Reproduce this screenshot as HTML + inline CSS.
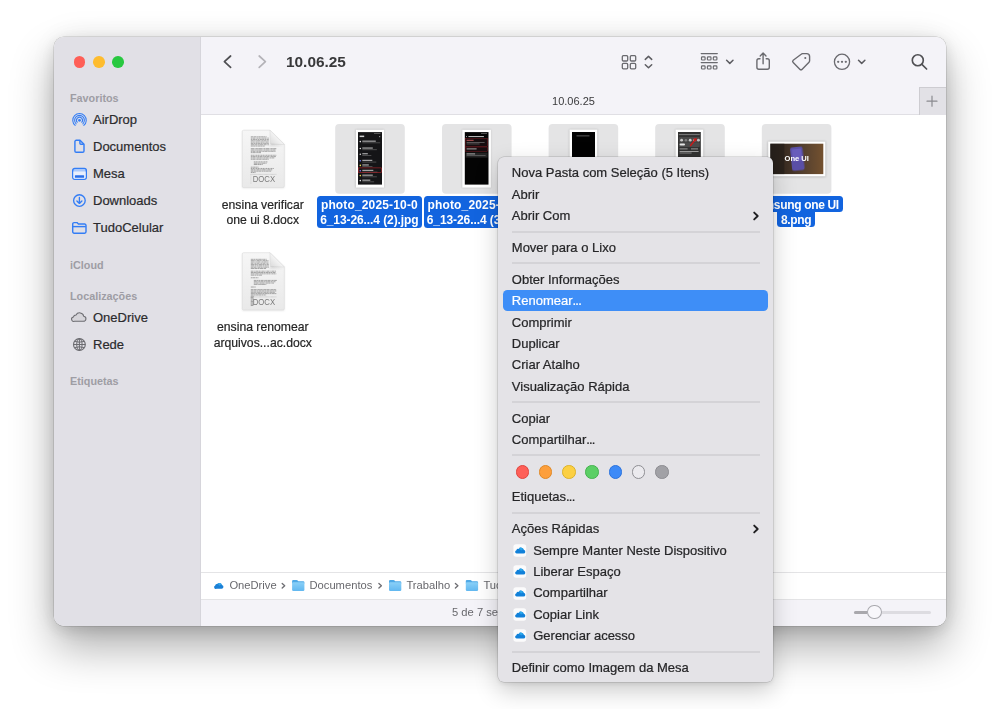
<!DOCTYPE html>
<html lang="pt-BR">
<head>
<meta charset="utf-8">
<title>Finder</title>
<style>
*{box-sizing:border-box;margin:0;padding:0}
html,body{width:1000px;height:709px;overflow:hidden;background:#fff}
body{font-family:"Liberation Sans",sans-serif;color:#262626;position:relative;-webkit-font-smoothing:antialiased}
.abs{position:absolute}
#win{position:absolute;left:54.4px;top:36.6px;width:891.3px;height:589.1px;border-radius:10px;background:#fff;
 box-shadow:0 0 0 .5px rgba(0,0,0,.2),0 22px 44px rgba(0,0,0,.31),0 4px 16px rgba(0,0,0,.11),0 0 34px rgba(0,0,0,.07);overflow:hidden;transform:translateZ(0)}
#wi{position:absolute;left:-.4px;top:-.6px;width:892px;height:590px}
#side{position:absolute;left:0;top:0;width:146.8px;height:590px;z-index:2;background:#e1e0e6;border-right:1px solid #d6d5db}
#tool{position:absolute;left:147px;top:0;width:745px;height:79px;background:#f4f3f8;border-bottom:1px solid #e0dfe4}
#content{position:absolute;left:147px;top:79px;width:745px;height:457px;background:#fff}
#path{position:absolute;left:147px;top:536px;width:745px;height:28px;background:#fff;border-top:1px solid #e4e4e6;border-bottom:1px solid #e4e4e6}
#status{position:absolute;left:147px;top:564px;width:745px;height:26px;background:#f4f3f8}
.tl{position:absolute;top:20px;width:11.6px;height:11.6px;border-radius:50%}
.sh{position:absolute;left:16px;font-size:10.8px;font-weight:bold;color:#9e9da4;white-space:nowrap}
.si{position:absolute;left:39px;font-size:13px;color:#2b2b2d;white-space:nowrap;-webkit-text-stroke:.2px currentColor}
.sic{position:absolute;left:17px}
#menu{position:absolute;left:497.8px;top:156.9px;width:274.9px;height:525.6px;border-radius:6px;background:#e4e3e7;transform:translateZ(0);
 box-shadow:0 0 0 .5px rgba(0,0,0,.2),0 9px 24px rgba(0,0,0,.2),0 2px 5px rgba(0,0,0,.08)}
.mi{position:absolute;left:14px;font-size:13px;color:#262628;white-space:nowrap;line-height:16px;margin-top:.6px;margin-left:-.4px;-webkit-text-stroke:.22px currentColor}
.ms{position:absolute;left:14.6px;width:248px;height:2px;background:rgba(0,0,0,.065);margin-top:-.5px}

.fl{position:absolute;width:100px;text-align:center;font-size:12.2px;line-height:15.6px;color:#262626;white-space:nowrap;padding-top:1.7px;-webkit-text-stroke:.2px currentColor}
.sl,.sl2{position:absolute;background:#1264df;color:#fff;font-size:12px;font-weight:bold;line-height:15.5px;text-align:center;white-space:nowrap;border-radius:3.5px;height:31.5px;padding-top:1.6px;overflow:hidden}
.sl i{font-style:normal;letter-spacing:.15px}.sl b{letter-spacing:-.085px}.sl2{letter-spacing:-.34px}
.sl2{height:15.8px}
.pt{position:absolute;top:4.7px;font-size:11.2px;line-height:14px;color:#68686d;white-space:nowrap}
</style>
</head>
<body>
<div id="win"><div id="wi">
  <div id="side">
    <div class="tl" style="left:19.6px;background:#fe5f57"></div>
    <div class="tl" style="left:39px;background:#febc2e"></div>
    <div class="tl" style="left:58.4px;background:#28c840"></div>

    <div class="sh" style="top:56px">Favoritos</div>
    <svg class="sic" style="left:17px;top:75.8px" width="17" height="17" viewBox="0 0 17 17" fill="none" stroke="#337df5" stroke-linecap="round">
      <circle cx="8.5" cy="8.3" r="1.4" fill="#337df5" stroke="none"/>
      <path d="M6.27 10.31 A3.0 3.0 0 1 1 10.73 10.31" stroke-width="1.05"/>
      <path d="M5.10 11.82 A4.9 4.9 0 1 1 11.90 11.82" stroke-width="1.05"/>
      <path d="M4.16 13.47 A6.75 6.75 0 1 1 12.84 13.47" stroke-width="1.05"/>
    </svg>
    <div class="si" style="top:76px">AirDrop</div>
    <svg class="sic" style="left:19px;top:103px" width="13" height="15" viewBox="0 0 13 15" fill="none" stroke="#337df5" stroke-width="1.42" stroke-linejoin="round">
      <path d="M1.9 2.6 a1.3 1.3 0 0 1 1.3 -1.3 H7 L11 5.3 V12 a1.3 1.3 0 0 1 -1.3 1.3 H3.2 a1.3 1.3 0 0 1 -1.3 -1.3 Z"/>
      <path d="M6.9 1.5 V4.3 a1 1 0 0 0 1 1 H10.8"/>
    </svg>
    <div class="si" style="top:103px">Documentos</div>
    <svg class="sic" style="left:17px;top:131px" width="17" height="14" viewBox="0 0 17 14" fill="none">
      <rect x="1.7" y="1.4" width="13.6" height="10.9" rx="2" fill="#a9c8fb" stroke="#337df5" stroke-width="1.4"/>
      <path d="M2.35 4.4 H14.65 V10.6 a1.1 1.1 0 0 1 -1.1 1.1 H3.45 a1.1 1.1 0 0 1 -1.1 -1.1 Z" fill="#e9effc"/>
      <rect x="3.9" y="8.2" width="9.2" height="2.5" rx=".5" fill="#2a6fe8"/>
    </svg>
    <div class="si" style="top:130px">Mesa</div>
    <svg class="sic" style="left:18px;top:157px" width="15" height="15" viewBox="0 0 15 15" fill="none" stroke="#337df5" stroke-width="1.35" stroke-linecap="round" stroke-linejoin="round">
      <circle cx="7.4" cy="7.5" r="5.8"/>
      <path d="M7.4 4.4 V10.3 M4.9 8 L7.4 10.4 L9.9 8"/>
    </svg>
    <div class="si" style="top:157px">Downloads</div>
    <svg class="sic" style="left:17px;top:185px" width="17" height="14" viewBox="0 0 17 14" fill="none" stroke="#337df5" stroke-width="1.42" stroke-linejoin="round">
      <path d="M1.7 3 a1.4 1.4 0 0 1 1.4 -1.4 H6 L7.4 3 H13.6 a1.4 1.4 0 0 1 1.4 1.4 V10.8 a1.4 1.4 0 0 1 -1.4 1.4 H3.1 a1.4 1.4 0 0 1 -1.4 -1.4 Z"/>
      <path d="M1.9 5.6 H14.8"/>
    </svg>
    <div class="si" style="top:184px">TudoCelular</div>
    <div class="sh" style="top:222.5px">iCloud</div>
    <div class="sh" style="top:254px">Localizações</div>
    <svg class="sic" style="left:16px;top:274px" width="19" height="14" viewBox="0 0 19 14" fill="#d6d5da" stroke="#6c6c71" stroke-width="1.15" stroke-linejoin="round">
      <path transform="translate(9.1 6.9) scale(.93 .86) translate(-9.8 -6.75)" d="M5 11.9 H14.2 a3 3 0 0 0 .5 -5.95 A4.3 4.3 0 0 0 6.5 4.6 A3 3 0 0 0 3.6 6.9 A2.55 2.55 0 0 0 5 11.9 Z"/>
    </svg>
    <div class="si" style="top:274px">OneDrive</div>
    <svg class="sic" style="left:18px;top:301px" width="15" height="15" viewBox="0 0 15 15" fill="none" stroke="#6c6c71" stroke-width="1">
      <circle cx="7.4" cy="7.5" r="5.9" stroke-width="1.15"/>
      <ellipse cx="7.4" cy="7.5" rx="2.7" ry="5.9"/>
      <path d="M7.4 1.6 V13.4 M1.5 7.5 H13.3 M2.5 4.4 Q7.4 6 12.3 4.4 M2.5 10.6 Q7.4 9 12.3 10.6"/>
    </svg>
    <div class="si" style="top:301px">Rede</div>
    <div class="sh" style="top:338.7px">Etiquetas</div>
  </div>
  <div id="tool">
    <svg class="abs" style="left:0;top:0" width="745" height="79" viewBox="201 36 745 79" fill="none" stroke-linecap="round" stroke-linejoin="round">
      <path d="M230.6 56 L224.4 61.7 L230.6 67.4" stroke="#4f4f53" stroke-width="1.7"/>
      <path d="M259.2 56 L265.4 61.7 L259.2 67.4" stroke="#b4b3b8" stroke-width="1.7"/>
      <g stroke="#6a6a6f" stroke-width="1.3">
        <rect x="622.3" y="55.6" width="5.4" height="5.4" rx="1.1"/>
        <rect x="630.3" y="55.6" width="5.4" height="5.4" rx="1.1"/>
        <rect x="622.3" y="63.4" width="5.4" height="5.4" rx="1.1"/>
        <rect x="630.3" y="63.4" width="5.4" height="5.4" rx="1.1"/>
      </g>
      <path d="M645.3 59.4 L648.5 56.4 L651.7 59.4 M645.3 64.8 L648.5 67.8 L651.7 64.8" stroke="#5d5d62" stroke-width="1.5"/>
      <g stroke="#6a6a6f" stroke-width="1.2">
        <path d="M701.2 53.5 H717.3 M701.2 62.6 H717.3" stroke-width="1.25"/>
        <rect x="701.5" y="56.9" width="3.6" height="3.1" rx=".8"/>
        <rect x="707.4" y="56.9" width="3.6" height="3.1" rx=".8"/>
        <rect x="713.3" y="56.9" width="3.6" height="3.1" rx=".8"/>
        <rect x="701.5" y="65.9" width="3.6" height="3.1" rx=".8"/>
        <rect x="707.4" y="65.9" width="3.6" height="3.1" rx=".8"/>
        <rect x="713.3" y="65.9" width="3.6" height="3.1" rx=".8"/>
      </g>
      <path d="M726.6 60.2 L729.8 63.4 L733 60.2" stroke="#5d5d62" stroke-width="1.5"/>
      <g stroke="#6a6a6f" stroke-width="1.4">
        <path d="M760 58.7 H758.9 a2 2 0 0 0 -2 2 V67.2 a2 2 0 0 0 2 2 H767.3 a2 2 0 0 0 2 -2 V60.7 a2 2 0 0 0 -2 -2 H766.2"/>
        <path d="M763.1 63.8 V53.2 M760.2 56 L763.1 53.1 L766 56"/>
      </g>
      <g stroke="#6a6a6f" stroke-width="1.4">
        <path d="M802.6 53.6 H806.6 a3 3 0 0 1 3 3 V60.8 a2 2 0 0 1 -.6 1.4 L802.2 69.2 a1.7 1.7 0 0 1 -2.4 0 L793.2 62.6 a1.7 1.7 0 0 1 0 -2.4 L801.2 54.2 a2 2 0 0 1 1.4 -.6 Z"/>
        <circle cx="805.3" cy="58" r="1.05" fill="#6a6a6f" stroke="none"/>
      </g>
      <g stroke="#6a6a6f" stroke-width="1.3">
        <circle cx="842" cy="61.8" r="7.6"/>
        <circle cx="838.2" cy="61.8" r="1.15" fill="#6e6e73" stroke="none"/>
        <circle cx="842" cy="61.8" r="1.15" fill="#6e6e73" stroke="none"/>
        <circle cx="845.8" cy="61.8" r="1.15" fill="#6e6e73" stroke="none"/>
      </g>
      <path d="M858.5 60.2 L861.7 63.4 L864.9 60.2" stroke="#5d5d62" stroke-width="1.5"/>
      <g stroke="#505054" stroke-width="1.65">
        <circle cx="917.8" cy="60.2" r="5.5"/>
        <path d="M921.9 64.3 L926.6 69"/>
      </g>
      <rect x="919" y="87" width="28" height="28" fill="#e2e1e6"/>
      <path d="M919.5 87.5 V115 M919.5 87.5 H946" stroke="#cdccd1" stroke-width="1"/>
      <path d="M927 101.2 H937 M932 96.2 V106.2" stroke="#8a8a8f" stroke-width="1.2"/>
    </svg>
    <div class="abs" style="left:85px;top:17px;font-size:15.4px;font-weight:bold;color:#38383a;line-height:18px;white-space:nowrap">10.06.25</div>
    <div class="abs" style="left:0;top:58px;width:745px;text-align:center;font-size:11px;color:#3a3a3c;line-height:14px">10.06.25</div>
  </div>
  <div id="content">
<svg class="abs" style="left:0;top:0" width="745" height="457" viewBox="201 115 745 457">
<defs><filter id="blur1" x="-20%" y="-20%" width="140%" height="140%"><feGaussianBlur stdDeviation="1.1"/></filter><filter id="blurp" x="-30%" y="-30%" width="160%" height="160%"><feGaussianBlur stdDeviation=".7"/></filter><filter id="blur2" x="-30%" y="-30%" width="160%" height="160%"><feGaussianBlur stdDeviation="2.2"/></filter></defs>

      <defs><linearGradient id="pga" x1="0" y1="0" x2="0" y2="1"><stop offset="0" stop-color="#f6f6f6"/><stop offset="1" stop-color="#e9e9e9"/></linearGradient>
      <linearGradient id="fda" x1="0" y1="1" x2="1" y2="0"><stop offset="0" stop-color="#d9d9d9"/><stop offset=".5" stop-color="#f4f4f4"/><stop offset="1" stop-color="#fdfdfd"/></linearGradient></defs>
      <path d="M243.3 131.39999999999998 H270.0 L284.3 144.5 V188.3 H242.3 V131.39999999999998 Z" fill="#000" opacity=".10" filter="url(#blur1)"/>
      <path d="M243.5 130.2 H270.0 L284.3 144.5 V186.3 a1.2 1.2 0 0 1 -1.2 1.2 H243.5 a1.2 1.2 0 0 1 -1.2 -1.2 V131.39999999999998 a1.2 1.2 0 0 1 1.2 -1.2 Z" fill="url(#pga)" stroke="#dcdcdc" stroke-width=".6"/>
      <g stroke="#444" stroke-width=".66" opacity=".68"><path d="M250.8 136.80 H266.6" stroke-dasharray="2.5 0.36 2.6 0.34 1.3 0.37"/><path d="M250.8 138.12 H268.8" stroke-dasharray="1.8 0.35 2.1 0.41 0.7 0.31"/><path d="M250.8 139.44 H268.8" stroke-dasharray="1.6 0.41 2.2 0.26 2.0 0.44"/><path d="M250.8 140.76 H268.8" stroke-dasharray="3.0 0.37 1.1 0.25 1.3 0.26"/><path d="M250.8 142.08 H268.8" stroke-dasharray="1.9 0.3 0.9 0.34 1.2 0.42"/><path d="M250.8 143.40 H268.8" stroke-dasharray="2.6 0.38 1.8 0.38 1.2 0.31"/><path d="M250.8 144.72 H268.8" stroke-dasharray="3.8 0.45 2.5 0.39 1.0 0.3"/><path d="M250.8 146.04 H264.8" stroke-dasharray="2.1 0.26 2.3 0.33 1.8 0.33"/><path d="M250.8 148.68 H276.3" stroke-dasharray="3.7 0.42 0.8 0.29 1.9 0.34"/><path d="M250.8 150.00 H275.5" stroke-dasharray="3.8 0.33 0.9 0.38 1.7 0.3"/><path d="M250.8 151.32 H275.8" stroke-dasharray="1.6 0.32 2.7 0.4 0.8 0.3"/><path d="M250.8 152.64 H261.0" stroke-dasharray="1.6 0.26 2.4 0.29 1.4 0.34"/><path d="M250.8 155.28 H276.3" stroke-dasharray="1.9 0.4 1.1 0.38 0.8 0.33"/><path d="M250.8 156.60 H276.3" stroke-dasharray="1.9 0.3 2.7 0.41 1.0 0.43"/><path d="M250.8 157.92 H274.3" stroke-dasharray="1.9 0.33 2.5 0.38 0.7 0.45"/><path d="M250.8 159.24 H268.7" stroke-dasharray="1.9 0.3 2.3 0.32 1.0 0.26"/><path d="M253.8 161.88 H267.8" stroke-dasharray="1.6 0.37 1.3 0.37 1.1 0.34"/><path d="M253.8 163.20 H266.6" stroke-dasharray="3.7 0.35 1.9 0.42 0.9 0.28"/><path d="M253.8 164.52 H262.7" stroke-dasharray="3.6 0.41 1.3 0.29 1.6 0.44"/><path d="M250.8 167.16 H258.4" stroke-dasharray="1.9 0.44 2.6 0.37 1.2 0.27"/><path d="M250.8 168.48 H273.8" stroke-dasharray="1.5 0.44 1.3 0.39 1.0 0.41"/><path d="M250.8 169.80 H272.5" stroke-dasharray="2.8 0.31 1.2 0.39 0.7 0.3"/><path d="M250.8 171.12 H271.2" stroke-dasharray="2.7 0.42 2.0 0.31 1.9 0.29"/><path d="M250.8 172.44 H255.9" stroke-dasharray="1.4 0.3 1.7 0.26 0.8 0.32"/></g>
      <path d="M270.0 130.2 V142.5 a2 2 0 0 0 2 2 H284.3 Z" fill="url(#fda)" stroke="#d6d6d6" stroke-width=".5"/>
      <path d="M268.8 146.1 H283.90000000000003 L271.0 144.0 Z" fill="#000" opacity=".13" filter="url(#blur1)"/>
      <path d="M250.60000000000002 174.39999999999998 H276.3" stroke="#9a9a9a" stroke-width=".45" stroke-dasharray=".7 .5"/>
      <path d="M250.9 174.7 V183.7" stroke="#aaa" stroke-width=".4" stroke-dasharray=".6 .6"/>
      <text x="263.90000000000003" y="182.39999999999998" font-family="Liberation Sans, sans-serif" font-size="8.7" fill="#7b7b7b" text-anchor="middle" textLength="22.4" lengthAdjust="spacingAndGlyphs">DOCX</text>

      <defs><linearGradient id="pgb" x1="0" y1="0" x2="0" y2="1"><stop offset="0" stop-color="#f6f6f6"/><stop offset="1" stop-color="#e9e9e9"/></linearGradient>
      <linearGradient id="fdb" x1="0" y1="1" x2="1" y2="0"><stop offset="0" stop-color="#d9d9d9"/><stop offset=".5" stop-color="#f4f4f4"/><stop offset="1" stop-color="#fdfdfd"/></linearGradient></defs>
      <path d="M243.3 253.89999999999998 H270.0 L284.3 267.0 V310.8 H242.3 V253.89999999999998 Z" fill="#000" opacity=".10" filter="url(#blur1)"/>
      <path d="M243.5 252.7 H270.0 L284.3 267.0 V308.8 a1.2 1.2 0 0 1 -1.2 1.2 H243.5 a1.2 1.2 0 0 1 -1.2 -1.2 V253.89999999999998 a1.2 1.2 0 0 1 1.2 -1.2 Z" fill="url(#pgb)" stroke="#dcdcdc" stroke-width=".6"/>
      <g stroke="#444" stroke-width=".66" opacity=".68"><path d="M250.8 259.30 H266.6" stroke-dasharray="2.8 0.28 1.5 0.43 2.0 0.38"/><path d="M250.8 260.62 H268.8" stroke-dasharray="3.1 0.37 1.1 0.26 0.6 0.43"/><path d="M250.8 261.94 H268.8" stroke-dasharray="3.1 0.44 0.8 0.38 1.3 0.4"/><path d="M250.8 263.26 H268.8" stroke-dasharray="2.2 0.45 1.0 0.36 1.6 0.43"/><path d="M250.8 264.58 H268.8" stroke-dasharray="3.2 0.39 2.4 0.43 1.1 0.39"/><path d="M250.8 265.90 H268.8" stroke-dasharray="3.6 0.42 1.6 0.41 1.8 0.36"/><path d="M250.8 267.22 H268.8" stroke-dasharray="2.9 0.33 2.0 0.37 0.7 0.38"/><path d="M250.8 268.54 H266.1" stroke-dasharray="3.8 0.43 2.3 0.33 1.6 0.37"/><path d="M250.8 271.18 H276.3" stroke-dasharray="2.5 0.42 1.0 0.4 0.6 0.37"/><path d="M250.8 272.50 H275.5" stroke-dasharray="2.6 0.3 2.2 0.35 1.5 0.43"/><path d="M250.8 273.82 H276.3" stroke-dasharray="2.0 0.25 1.4 0.39 0.9 0.28"/><path d="M250.8 275.14 H262.3" stroke-dasharray="3.6 0.38 1.7 0.43 1.1 0.38"/><path d="M250.8 277.78 H258.4" stroke-dasharray="1.9 0.34 2.4 0.43 1.8 0.33"/><path d="M253.8 280.42 H276.8" stroke-dasharray="2.8 0.31 1.1 0.35 1.8 0.42"/><path d="M253.8 281.74 H275.5" stroke-dasharray="3.1 0.44 1.4 0.28 1.2 0.31"/><path d="M253.8 283.06 H274.2" stroke-dasharray="1.9 0.33 2.1 0.35 1.0 0.42"/><path d="M253.8 284.38 H266.6" stroke-dasharray="3.8 0.34 0.9 0.26 1.8 0.26"/><path d="M250.8 287.02 H255.9" stroke-dasharray="3.1 0.36 1.4 0.41 0.6 0.28"/><path d="M250.8 289.66 H276.3" stroke-dasharray="2.5 0.25 2.5 0.3 0.8 0.26"/><path d="M250.8 290.98 H276.3" stroke-dasharray="2.9 0.34 2.1 0.38 1.7 0.44"/><path d="M250.8 292.30 H275.0" stroke-dasharray="3.0 0.29 1.8 0.29 0.6 0.34"/><path d="M250.8 293.62 H276.3" stroke-dasharray="3.1 0.29 1.3 0.32 1.6 0.35"/><path d="M250.8 294.94 H266.1" stroke-dasharray="2.9 0.4 1.6 0.41 1.9 0.27"/><path d="M250.8 296.26 H253.9" stroke-dasharray="3.6 0.39 1.1 0.34 1.5 0.43"/><path d="M250.8 297.58 H253.9" stroke-dasharray="2.3 0.36 2.6 0.41 1.9 0.34"/><path d="M250.8 298.90 H253.9" stroke-dasharray="3.0 0.29 2.2 0.41 1.5 0.39"/><path d="M250.8 300.22 H253.9" stroke-dasharray="1.9 0.43 2.8 0.45 1.4 0.41"/><path d="M250.8 301.54 H253.9" stroke-dasharray="2.2 0.43 2.5 0.32 0.7 0.34"/><path d="M250.8 302.86 H253.9" stroke-dasharray="2.7 0.4 1.8 0.26 1.7 0.26"/><path d="M250.8 304.18 H253.9" stroke-dasharray="3.3 0.28 1.5 0.41 0.8 0.28"/><path d="M250.8 305.50 H253.4" stroke-dasharray="2.6 0.39 2.5 0.39 1.9 0.35"/></g>
      <path d="M270.0 252.7 V265.0 a2 2 0 0 0 2 2 H284.3 Z" fill="url(#fdb)" stroke="#d6d6d6" stroke-width=".5"/>
      <path d="M268.8 268.6 H283.90000000000003 L271.0 266.5 Z" fill="#000" opacity=".13" filter="url(#blur1)"/>
      <path d="M250.60000000000002 296.9 H276.3" stroke="#9a9a9a" stroke-width=".45" stroke-dasharray=".7 .5"/>
      <path d="M250.9 297.2 V306.2" stroke="#aaa" stroke-width=".4" stroke-dasharray=".6 .6"/>
      <text x="263.90000000000003" y="304.9" font-family="Liberation Sans, sans-serif" font-size="8.7" fill="#7b7b7b" text-anchor="middle" textLength="22.4" lengthAdjust="spacingAndGlyphs">DOCX</text>
<rect x="335.2" y="124" width="69.6" height="69.8" rx="4" fill="#e4e4e5"/>
<rect x="442" y="124" width="69.6" height="69.8" rx="4" fill="#e4e4e5"/>
<rect x="548.6" y="124" width="69.6" height="69.8" rx="4" fill="#e4e4e5"/>
<rect x="655.2" y="124" width="69.6" height="69.8" rx="4" fill="#e4e4e5"/>
<rect x="761.8" y="124" width="69.6" height="69.8" rx="4" fill="#e4e4e5"/>
<rect x="355.6" y="129.6" width="28.4" height="58.2" fill="#000" opacity=".16" filter="url(#blur1)"/><rect x="356" y="129.8" width="28" height="57.8" fill="#fff"/><rect x="358" y="132.1" width="24" height="52.5" fill="#151517"/><rect x="359.6" y="135.6" width="4.6" height="1.5" fill="#cfcfcf"/><rect x="379" y="136" width="1.2" height="1.2" fill="#888"/><rect x="374" y="133" width="6.5" height=".8" fill="#666"/><circle cx="360.3" cy="141.6" r=".8" fill="#e8e8e8"/><rect x="362.3" y="140.6" width="13.5" height="1.1" fill="#d0d0d0" opacity=".85"/><rect x="362.3" y="142.5" width="17.85" height=".7" fill="#777" opacity=".8"/><circle cx="360.3" cy="148.5" r=".8" fill="#e0e0e0"/><rect x="362.3" y="147.5" width="10.5" height="1.1" fill="#d0d0d0" opacity=".85"/><rect x="362.3" y="149.4" width="14.55" height=".7" fill="#777" opacity=".8"/><circle cx="360.3" cy="154.2" r=".8" fill="#dcdcdc"/><rect x="362.3" y="153.2" width="5.5" height="1.1" fill="#d0d0d0" opacity=".85"/><rect x="362.3" y="155.1" width="9.05" height=".7" fill="#777" opacity=".8"/><circle cx="360.3" cy="160.8" r=".8" fill="#6d7df0"/><rect x="362.3" y="159.8" width="10" height="1.1" fill="#d0d0d0" opacity=".85"/><rect x="362.3" y="161.70000000000002" width="14.0" height=".7" fill="#777" opacity=".8"/><circle cx="360.3" cy="165.4" r=".8" fill="#e8d34a"/><rect x="362.3" y="164.4" width="6.5" height="1.1" fill="#d0d0d0" opacity=".85"/><rect x="362.3" y="166.3" width="10.15" height=".7" fill="#777" opacity=".8"/><circle cx="360.3" cy="170.8" r=".8" fill="#8a72e8"/><rect x="362.3" y="169.8" width="11" height="1.1" fill="#d0d0d0" opacity=".85"/><rect x="362.3" y="171.70000000000002" width="15.100000000000001" height=".7" fill="#777" opacity=".8"/><circle cx="360.3" cy="175.6" r=".8" fill="#e8d34a"/><rect x="362.3" y="174.6" width="10.5" height="1.1" fill="#d0d0d0" opacity=".85"/><rect x="362.3" y="176.5" width="14.55" height=".7" fill="#777" opacity=".8"/><circle cx="360.3" cy="180.6" r=".8" fill="#e0e0e0"/><rect x="362.3" y="179.6" width="8" height="1.1" fill="#d0d0d0" opacity=".85"/><rect x="362.3" y="181.5" width="11.8" height=".7" fill="#777" opacity=".8"/><rect x="358.6" y="167.9" width="22.8" height="4.6" fill="none" stroke="#b5262c" stroke-width=".6"/>
<rect x="462" y="129.6" width="28.8" height="58.2" fill="#000" opacity=".16" filter="url(#blur1)"/><rect x="462.3" y="129.8" width="28.6" height="57.8" fill="#fff"/><rect x="464.8" y="132.1" width="23.7" height="52.5" fill="#040404"/><rect x="468.4" y="136" width="15.5" height="1.1" fill="#b5b5b5"/><rect x="466" y="136.1" width="1" height="1" fill="#999"/><rect x="481" y="133" width="6" height=".8" fill="#666"/><rect x="465.6" y="138.7" width="22" height="7.8" fill="#160d0f" stroke="#7e1f24" stroke-width=".5"/><rect x="466.6" y="139.8" width="7" height="1" fill="#b85555"/><rect x="466.6" y="142" width="18" height=".7" fill="#777"/><rect x="466.6" y="143.6" width="13" height=".7" fill="#666"/><rect x="465.6" y="147" width="22" height="4.4" fill="#160d0f" stroke="#7e1f24" stroke-width=".5"/><rect x="466.6" y="148.4" width="10" height="1" fill="#a8a8a8"/><rect x="465.6" y="152.6" width="22" height="5" fill="#242424"/><rect x="466.6" y="153.4" width="8.5" height="1" fill="#a8a8a8"/><rect x="466.6" y="155.3" width="19" height=".7" fill="#6c6c6c"/>
<rect x="569.2" y="129.4" width="28.4" height="40" fill="#000" opacity=".16" filter="url(#blur1)"/><rect x="569.6" y="129.6" width="27.6" height="40" fill="#fff"/><rect x="572" y="132" width="23" height="40" fill="#020202"/><rect x="576.5" y="135.5" width="13" height=".8" fill="#6e6e6e"/>
<rect x="675.2" y="129.4" width="28.4" height="40" fill="#000" opacity=".16" filter="url(#blur1)"/><rect x="675.6" y="129.6" width="27.6" height="40" fill="#fff"/><rect x="678" y="132" width="22.8" height="40" fill="#323232"/><rect x="678.8" y="134" width="21" height="1.1" fill="#767676"/><rect x="678.8" y="137" width="21" height="5.6" rx="1" fill="#484848"/><circle cx="681.6" cy="140.2" r="1.4" fill="#c8c8c8"/><circle cx="685.9" cy="140.2" r="1.3" fill="#7e7e7e"/><circle cx="690.2" cy="140.2" r="1.4" fill="#c8c8c8"/><circle cx="694.5" cy="140.2" r="1.4" fill="#b89090"/><circle cx="698.4" cy="140.2" r="1.4" fill="#c0c0c0"/><rect x="678.8" y="142.6" width="21" height="4.4" rx="1" fill="#4c4c4c"/><rect x="679.6" y="143.6" width="5.4" height="2" rx="1" fill="#e8e8e8"/><path d="M690.2 146 L695.6 139.4" stroke="#c81a1a" stroke-width="1.5"/><path d="M693 138.8 L696.8 137.9 L696.4 141.6 Z" fill="#c81a1a"/><rect x="679.6" y="148.4" width="8" height="1" fill="#9a9a9a"/><rect x="691" y="148.4" width="7" height="1" fill="#9a9a9a"/><rect x="679.6" y="151" width="19" height=".8" fill="#bbb"/><rect x="679.6" y="152.6" width="12" height=".8" fill="#999"/>
<defs><linearGradient id="br" x1="0" y1="0" x2="1" y2="0"><stop offset="0" stop-color="#2b241d"/><stop offset=".3" stop-color="#3c2e23"/><stop offset=".62" stop-color="#54402f"/><stop offset="1" stop-color="#74512f"/></linearGradient></defs><rect x="767.8" y="141.4" width="57.9" height="35.6" fill="#000" opacity=".2" filter="url(#blur1)"/><rect x="768.2" y="141.6" width="57.1" height="34.7" fill="#fff"/><rect x="770.3" y="143.7" width="53" height="30.4" fill="url(#br)"/><rect x="770.3" y="143.7" width="14" height="30.4" fill="#201c18" opacity=".55"/><rect x="791" y="147" width="12.5" height="23.5" rx="2" fill="#5a4fa6" filter="url(#blurp)" transform="rotate(-6 797 158)"/><rect x="792.6" y="149" width="9.4" height="12" rx="1" fill="#6e62c4" opacity=".7" filter="url(#blurp)" transform="rotate(-6 797 158)"/><text x="796.7" y="160.9" font-family="Liberation Sans, sans-serif" font-size="7" font-weight="bold" fill="#fff" text-anchor="middle" textLength="24.4" lengthAdjust="spacingAndGlyphs">One UI</text>
</svg>

    <div class="fl" style="left:11.8px;top:81px">ensina verificar<br>one ui 8.docx</div>
    <div class="fl" style="left:11.8px;top:203.3px">ensina renomear<br>arquivos...ac.docx</div>
    <div class="sl" style="left:116.2px;top:81px;width:104.4px"><i>photo_2025-10-0</i><br><b>6_13-26...4 (2).jpg</b></div>
    <div class="sl" style="left:222.8px;top:81px;width:104.4px"><i>photo_2025-10-0</i><br><b>6_13-26...4 (3).jpg</b></div>
    <div class="sl" style="left:329.4px;top:81px;width:104.4px"><i>photo_2025-10-0</i><br><b>6_13-26...4 (4).jpg</b></div>
    <div class="sl" style="left:436px;top:81px;width:104.4px"><i>photo_2025-10-0</i><br><b>6_13-26...4 (5).jpg</b></div>
    <div class="sl2" style="left:548.7px;top:81px;width:93px;text-align:right;padding-right:3.9px">samsung one UI</div>
    <div class="sl2" style="left:576.4px;top:96.5px;width:37.6px;border-radius:0 0 3.5px 3.5px">8.png</div>
  </div>
  <div id="path">
    <svg class="abs" style="left:0;top:-.8px" width="745" height="27" viewBox="201 572.5 745 27">
      <defs><linearGradient id="fg" x1="0" y1="0" x2="0" y2="1"><stop offset="0" stop-color="#8ad0f8"/><stop offset="1" stop-color="#62b8f0"/></linearGradient></defs>
      <path d="M216.5 589.2 H221.6 a1.85 1.85 0 0 0 .35 -3.67 A2.6 2.6 0 0 0 217.3 584.6 A1.9 1.9 0 0 0 215.2 585.9 A1.7 1.7 0 0 0 216.5 589.2 Z" fill="#1a80d6"/><path d="M217.3 584.6 A2.6 2.6 0 0 1 221.95 585.53 A1.85 1.85 0 0 0 219.5 586.3 A2.8 2.8 0 0 0 217.3 584.6 Z" fill="#35a5ea"/>
<g transform="translate(292.1 580)"><path d="M0 1.6 a1.2 1.2 0 0 1 1.2 -1.2 H4.4 a1.2 1.2 0 0 1 .9 .4 L6.2 1.8 H11.1 a1.2 1.2 0 0 1 1.2 1.2 V4 H0 Z" fill="#4fa9e6"/><rect x="0" y="2.7" width="12.3" height="8.7" rx="1.2" fill="url(#fg)"/></g><g transform="translate(389 580)"><path d="M0 1.6 a1.2 1.2 0 0 1 1.2 -1.2 H4.4 a1.2 1.2 0 0 1 .9 .4 L6.2 1.8 H11.1 a1.2 1.2 0 0 1 1.2 1.2 V4 H0 Z" fill="#4fa9e6"/><rect x="0" y="2.7" width="12.3" height="8.7" rx="1.2" fill="url(#fg)"/></g><g transform="translate(465.8 580)"><path d="M0 1.6 a1.2 1.2 0 0 1 1.2 -1.2 H4.4 a1.2 1.2 0 0 1 .9 .4 L6.2 1.8 H11.1 a1.2 1.2 0 0 1 1.2 1.2 V4 H0 Z" fill="#4fa9e6"/><rect x="0" y="2.7" width="12.3" height="8.7" rx="1.2" fill="url(#fg)"/></g>
      <g fill="none" stroke="#6e6e73" stroke-width="1.35" stroke-linecap="round" stroke-linejoin="round">
        <path d="M282.2 583.9 L284.7 586.2 L282.2 588.5"/><path d="M378.9 583.9 L381.4 586.2 L378.9 588.5"/><path d="M455.4 583.9 L457.9 586.2 L455.4 588.5"/>
      </g>
    </svg>
    <div class="pt" style="left:28.4px">OneDrive</div>
    <div class="pt" style="left:108.5px">Documentos</div>
    <div class="pt" style="left:205.4px">Trabalho</div>
    <div class="pt" style="left:282.4px">TudoCelular</div>
  </div>
  <div id="status">
    <div class="pt" style="left:251px;top:5.4px">5 de 7 selecionado(s), 1,02 TB disponível(is)</div>
    <div class="abs" style="left:652.7px;top:10.4px;width:77px;height:3.2px;border-radius:2px;background:#dddce1;margin-top:.2px"></div>
    <div class="abs" style="left:652.7px;top:10.4px;width:22px;height:3.2px;border-radius:2px;background:#a9a8ad;margin-top:.2px"></div>
    <div class="abs" style="left:666.2px;top:5px;width:14.4px;height:14.4px;border-radius:50%;background:#f8f7fb;box-shadow:inset 0 0 0 1px #a8a8ad"></div>
  </div>
</div></div>
<div id="menu"><div style="position:absolute;left:-.2px;top:-.5px;width:275.2px;height:526px">
  <div class="abs" style="left:5.2px;top:133.4px;width:265.2px;height:21.2px;border-radius:4.5px;background:#3e8ef7"></div>
  <div class="mi" style="left:14.6px;top:8.4px">Nova Pasta com Seleção (5 Itens)</div>
  <div class="mi" style="left:14.6px;top:29.7px">Abrir</div>
  <div class="mi" style="left:14.6px;top:51.1px">Abrir Com</div>
  <svg class="abs" style="left:252px;top:53.5px" width="10" height="12" viewBox="0 0 10 12" fill="none" stroke="#1f1f21" stroke-width="1.9" stroke-linecap="round" stroke-linejoin="round"><path d="M4.2 2.6 L7.7 6 L4.2 9.4"/></svg>
  <div class="ms" style="top:74.7px"></div>
  <div class="mi" style="left:14.6px;top:83.1px">Mover para o Lixo</div>
  <div class="ms" style="top:106.6px"></div>
  <div class="mi" style="left:14.6px;top:115.1px">Obter Informações</div>
  <div class="mi" style="left:14.6px;top:136.4px;color:#fff">Renomear<span style="letter-spacing:-.8px">...</span></div>
  <div class="mi" style="left:14.6px;top:157.8px">Comprimir</div>
  <div class="mi" style="left:14.6px;top:179.1px">Duplicar</div>
  <div class="mi" style="left:14.6px;top:200.4px">Criar Atalho</div>
  <div class="mi" style="left:14.6px;top:221.8px">Visualização Rápida</div>
  <div class="ms" style="top:245.3px"></div>
  <div class="mi" style="left:14.6px;top:253.8px">Copiar</div>
  <div class="mi" style="left:14.6px;top:275.1px">Compartilhar<span style="letter-spacing:-.8px">...</span></div>
  <div class="ms" style="top:298.6px"></div>
  <div class="abs" style="left:18.00px;top:308.90px;width:13.4px;height:13.4px;border-radius:50%;background:#fe5f58;border:.7px solid #e0443d"></div>
  <div class="abs" style="left:41.25px;top:308.90px;width:13.4px;height:13.4px;border-radius:50%;background:#fd9f3c;border:.7px solid #df8826"></div>
  <div class="abs" style="left:64.50px;top:308.90px;width:13.4px;height:13.4px;border-radius:50%;background:#fcd043;border:.7px solid #dcb22a"></div>
  <div class="abs" style="left:87.75px;top:308.90px;width:13.4px;height:13.4px;border-radius:50%;background:#5bcf65;border:.7px solid #45b24f"></div>
  <div class="abs" style="left:111.00px;top:308.90px;width:13.4px;height:13.4px;border-radius:50%;background:#3d8af7;border:.7px solid #2a72dd"></div>
  <div class="abs" style="left:134.25px;top:308.90px;width:13.4px;height:13.4px;border-radius:50%;background:#ebeaee;border:1.1px solid #8e8e93"></div>
  <div class="abs" style="left:157.50px;top:308.90px;width:13.4px;height:13.4px;border-radius:50%;background:#a1a1a6;border:.7px solid #8c8c91"></div>
  <div class="mi" style="left:14.6px;top:332.3px">Etiquetas<span style="letter-spacing:-.8px">...</span></div>
  <div class="ms" style="top:355.8px"></div>
  <div class="mi" style="left:14.6px;top:364.3px">Ações Rápidas</div>
  <svg class="abs" style="left:252px;top:366.7px" width="10" height="12" viewBox="0 0 10 12" fill="none" stroke="#1f1f21" stroke-width="1.9" stroke-linecap="round" stroke-linejoin="round"><path d="M4.2 2.6 L7.7 6 L4.2 9.4"/></svg>
  <svg class="abs" style="left:15px;top:387.5px" width="14" height="13" viewBox="0 0 14 13"><rect x=".4" y=".3" width="12.8" height="12.4" rx="2.6" fill="#fbfbfc"/><path d="M3.6 9.6 H10.4 a1.9 1.9 0 0 0 .35 -3.77 A2.75 2.75 0 0 0 5.7 4.9 A1.95 1.95 0 0 0 3.35 6.2 A1.75 1.75 0 0 0 3.6 9.6 Z" fill="#1180d9"/><path d="M5.7 4.9 A2.75 2.75 0 0 1 10.75 5.83 A1.9 1.9 0 0 0 8.2 6.6 A3 3 0 0 0 5.7 4.9 Z" fill="#2ba6ea"/></svg>
  <div class="mi" style="left:36px;top:385.6px">Sempre Manter Neste Dispositivo</div>
  <svg class="abs" style="left:15px;top:408.9px" width="14" height="13" viewBox="0 0 14 13"><rect x=".4" y=".3" width="12.8" height="12.4" rx="2.6" fill="#fbfbfc"/><path d="M3.6 9.6 H10.4 a1.9 1.9 0 0 0 .35 -3.77 A2.75 2.75 0 0 0 5.7 4.9 A1.95 1.95 0 0 0 3.35 6.2 A1.75 1.75 0 0 0 3.6 9.6 Z" fill="#1180d9"/><path d="M5.7 4.9 A2.75 2.75 0 0 1 10.75 5.83 A1.9 1.9 0 0 0 8.2 6.6 A3 3 0 0 0 5.7 4.9 Z" fill="#2ba6ea"/></svg>
  <div class="mi" style="left:36px;top:407.0px">Liberar Espaço</div>
  <svg class="abs" style="left:15px;top:430.2px" width="14" height="13" viewBox="0 0 14 13"><rect x=".4" y=".3" width="12.8" height="12.4" rx="2.6" fill="#fbfbfc"/><path d="M3.6 9.6 H10.4 a1.9 1.9 0 0 0 .35 -3.77 A2.75 2.75 0 0 0 5.7 4.9 A1.95 1.95 0 0 0 3.35 6.2 A1.75 1.75 0 0 0 3.6 9.6 Z" fill="#1180d9"/><path d="M5.7 4.9 A2.75 2.75 0 0 1 10.75 5.83 A1.9 1.9 0 0 0 8.2 6.6 A3 3 0 0 0 5.7 4.9 Z" fill="#2ba6ea"/></svg>
  <div class="mi" style="left:36px;top:428.3px">Compartilhar</div>
  <svg class="abs" style="left:15px;top:451.6px" width="14" height="13" viewBox="0 0 14 13"><rect x=".4" y=".3" width="12.8" height="12.4" rx="2.6" fill="#fbfbfc"/><path d="M3.6 9.6 H10.4 a1.9 1.9 0 0 0 .35 -3.77 A2.75 2.75 0 0 0 5.7 4.9 A1.95 1.95 0 0 0 3.35 6.2 A1.75 1.75 0 0 0 3.6 9.6 Z" fill="#1180d9"/><path d="M5.7 4.9 A2.75 2.75 0 0 1 10.75 5.83 A1.9 1.9 0 0 0 8.2 6.6 A3 3 0 0 0 5.7 4.9 Z" fill="#2ba6ea"/></svg>
  <div class="mi" style="left:36px;top:449.7px">Copiar Link</div>
  <svg class="abs" style="left:15px;top:472.9px" width="14" height="13" viewBox="0 0 14 13"><rect x=".4" y=".3" width="12.8" height="12.4" rx="2.6" fill="#fbfbfc"/><path d="M3.6 9.6 H10.4 a1.9 1.9 0 0 0 .35 -3.77 A2.75 2.75 0 0 0 5.7 4.9 A1.95 1.95 0 0 0 3.35 6.2 A1.75 1.75 0 0 0 3.6 9.6 Z" fill="#1180d9"/><path d="M5.7 4.9 A2.75 2.75 0 0 1 10.75 5.83 A1.9 1.9 0 0 0 8.2 6.6 A3 3 0 0 0 5.7 4.9 Z" fill="#2ba6ea"/></svg>
  <div class="mi" style="left:36px;top:471.0px">Gerenciar acesso</div>
  <div class="ms" style="top:494.7px"></div>
  <div class="mi" style="left:14.6px;top:503.3px">Definir como Imagem da Mesa</div>
</div></div>
</body>
</html>
